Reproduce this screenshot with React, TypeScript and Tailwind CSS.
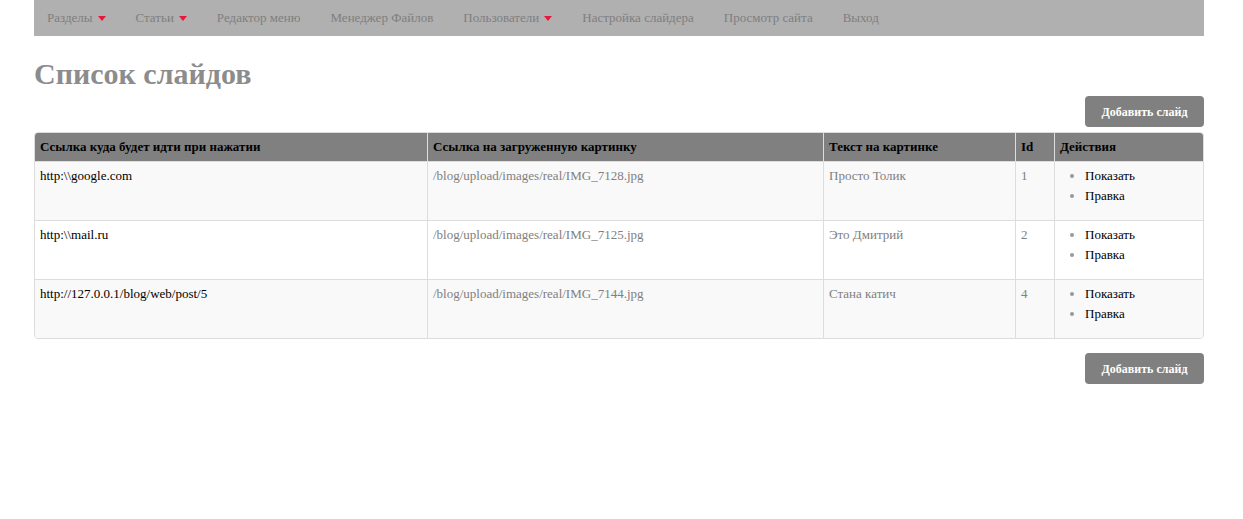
import React from 'react';

const navItems = [
  { label: 'Разделы', caret: true },
  { label: 'Статьи', caret: true },
  { label: 'Редактор меню' },
  { label: 'Менеджер Файлов' },
  { label: 'Пользователи', caret: true },
  { label: 'Настройка слайдера' },
  { label: 'Просмотр сайта' },
  { label: 'Выход' },
];

const slides = [
  { link: 'http:\\\\google.com', img: '/blog/upload/images/real/IMG_7128.jpg', text: 'Просто Толик', id: 1 },
  { link: 'http:\\\\mail.ru', img: '/blog/upload/images/real/IMG_7125.jpg', text: 'Это Дмитрий', id: 2 },
  { link: 'http://127.0.0.1/blog/web/post/5', img: '/blog/upload/images/real/IMG_7144.jpg', text: 'Стана катич', id: 4 },
];

const cols = 'grid grid-cols-[392px_396px_192px_39px_1fr]';

const Caret: React.FC = () => (
  <span className="ml-[5px] inline-block h-0 w-0 border-x-[4px] border-t-[5px] border-x-transparent border-t-[#e8173c] align-middle" />
);

const AddButton: React.FC = () => (
  <div className="flex justify-end">
    <button className="h-[31px] w-[119px] rounded-[4px] bg-[#808080] text-[12px] font-bold text-white">
      Добавить слайд
    </button>
  </div>
);

const App: React.FC = () => {
  return (
    <div className="min-h-[519px] bg-white font-['Liberation_Serif',serif] text-[13px] text-black">
      <div className="ml-[34px] w-[1170px]">
        <nav className="flex h-[36px] items-center bg-[#b0b0b0]">
          <ul className="-ml-[2px] flex">
            {navItems.map((item) => (
              <li key={item.label} className="flex items-center px-[15px] text-[13px] text-[#7f7f7f]">
                {item.label}
                {item.caret && <Caret />}
              </li>
            ))}
          </ul>
        </nav>

        <h1 className="mt-[21px] text-[30px] font-bold leading-[33px] text-[#8c8c8c]">Список слайдов</h1>

        <div className="mt-[6px]">
          <AddButton />
        </div>

        <div className="mt-[5px] overflow-hidden rounded-[4px] border border-[#dddddd]">
          <div className={`${cols} bg-[#808080] text-[13px] font-bold leading-[20px]`}>
            <div className="px-[5px] py-[4px]">Ссылка куда будет идти при нажатии</div>
            <div className="border-l border-[#dddddd] px-[5px] py-[4px]">Ссылка на загруженную картинку</div>
            <div className="border-l border-[#dddddd] px-[5px] py-[4px]">Текст на картинке</div>
            <div className="border-l border-[#dddddd] px-[5px] py-[4px]">Id</div>
            <div className="border-l border-[#dddddd] px-[5px] py-[4px]">Действия</div>
          </div>
          {slides.map((s, i) => (
            <div
              key={s.id}
              className={`${cols} border-t border-[#dddddd] leading-[20px] ${i % 2 === 0 ? 'bg-[#f9f9f9]' : 'bg-white'}`}
            >
              <div className="px-[5px] pt-[4px]">{s.link}</div>
              <div className="border-l border-[#dddddd] px-[5px] pt-[4px] text-[#808080]">{s.img}</div>
              <div className="border-l border-[#dddddd] px-[5px] pt-[4px] text-[#808080]">{s.text}</div>
              <div className="border-l border-[#dddddd] px-[5px] pt-[4px] text-[#808080]">{s.id}</div>
              <div className="border-l border-[#dddddd] px-[5px] pb-[5px] pt-[4px]">
                <ul className="mb-[9px] list-disc pl-[25px] marker:text-[#999999]">
                  <li>Показать</li>
                  <li>Правка</li>
                </ul>
              </div>
            </div>
          ))}
        </div>

        <div className="mt-[14px]">
          <AddButton />
        </div>
      </div>
    </div>
  );
};

export default App;
